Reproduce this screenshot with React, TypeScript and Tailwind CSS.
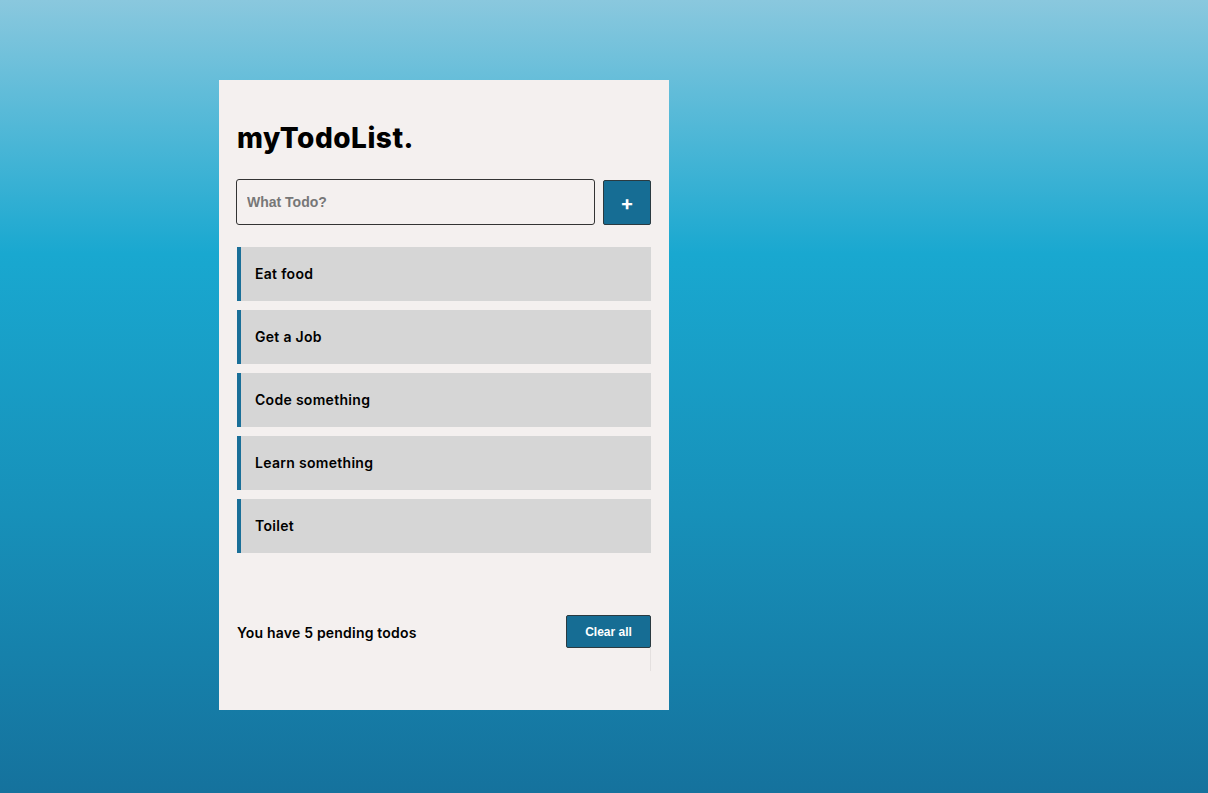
import React from 'react';

const todos = ['Eat food', 'Get a Job', 'Code something', 'Learn something', 'Toilet'];

export default function App() {
  return (
    <div className="min-h-[793px] w-full bg-[linear-gradient(180deg,#8ac8de_0%,#19a8d0_32%,#1790b9_65%,#15729d_100%)] font-['Inter',sans-serif]">
      <div className="pt-[80px] pl-[219px]">
        <div className="flex h-[630px] w-[450px] flex-col bg-[#f4f0ef] px-[18px] pt-[42px]">
          <h1 className="text-[28px] leading-[32px] font-extrabold tracking-[0.5px] text-black">myTodoList.</h1>

          <div className="mt-[25px] flex gap-[8px]">
            <input
              placeholder="What Todo?"
              className="h-[46px] w-[359px] -ml-[1px] rounded-[3px] border border-[#333] bg-[#f4f0ef] px-[10px] font-['Liberation_Sans',Arial,sans-serif] text-[14px] font-bold text-black outline-none placeholder:text-[#777]"
            />
            <button className="mt-[1px] flex h-[45px] w-[48px] items-center justify-center rounded-[2px] border border-[#2b3a40] bg-[#166d94] text-[20px] leading-none font-bold text-white">
              +
            </button>
          </div>

          <ul className="mt-[22px] flex flex-col gap-[9px]">
            {todos.map((t) => (
              <li
                key={t}
                className="flex h-[54px] items-center border-l-[4px] border-[#1a6f98] bg-[#d6d6d6] pb-[1px] pl-[14px] text-[14px] font-semibold tracking-[0.3px] text-black"
              >
                {t}
              </li>
            ))}
          </ul>

          <div className="mt-[62px] flex items-start justify-between">
            <span className="mt-[7px] text-[14px] font-semibold tracking-[0.2px] text-black">You have 5 pending todos</span>
            <div className="flex flex-col items-end">
              <button className="h-[33px] w-[85px] rounded-[2px] border border-[#2b3a40] bg-[#166d94] font-['Liberation_Sans',Arial,sans-serif] text-[12px] font-bold text-white">
                Clear all
              </button>
              <div className="h-[23px] w-px bg-[#e4e0df]" />
            </div>
          </div>
        </div>
      </div>
    </div>
  );
}
